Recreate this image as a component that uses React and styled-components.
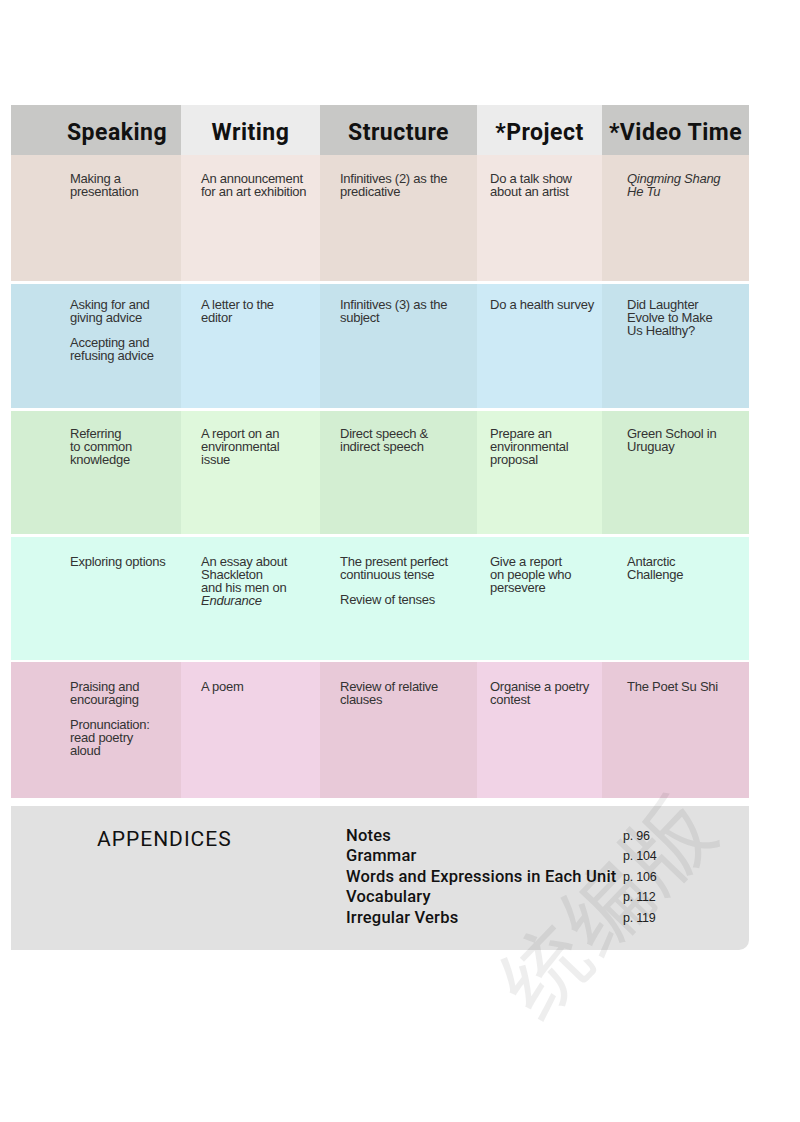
import React from "react";
import styled, { createGlobalStyle } from "styled-components";

const Global = createGlobalStyle`
  html, body { margin: 0; padding: 0; background: #ffffff; }
  body { font-family: "Liberation Sans", Arial, sans-serif; color: #333; }
`;

const Page = styled.div`
  position: relative;
  width: 800px;
  height: 1122px;
  overflow: hidden;
  padding: 105px 0 0 11px;
  box-sizing: border-box;
`;

const Table = styled.div`
  width: 738px;
  display: flex;
  flex-direction: column;
`;

const COLS = "170px 139px 157px 125px 147px";

const HeaderRow = styled.div`
  display: grid;
  grid-template-columns: ${COLS};
  height: 50px;
`;

const HeadCell = styled.div`
  background: ${(p) => (p.$light ? "#ececec" : "#c8c8c6")};
  display: flex;
  align-items: center;
  justify-content: center;
  padding-left: ${(p) => p.$indent || 0}px;
  padding-top: 4px;
  font-family: Roboto, "DejaVu Sans", sans-serif;
  font-weight: 700;
  font-size: 23px;
  color: #111;
  letter-spacing: 0.5px;
  white-space: nowrap;
`;

const Row = styled.div`
  display: grid;
  grid-template-columns: ${COLS};
  height: ${(p) => p.$h}px;
  margin-top: ${(p) => p.$gap}px;
`;

const Cell = styled.div`
  background: ${(p) => (p.$light ? p.$tone[1] : p.$tone[0])};
  padding: ${(p) => p.$pad}px 6px 0 ${(p) => p.$left}px;
  font-family: "Liberation Sans", Arial, sans-serif;
  font-size: 13px;
  line-height: 13px;
  letter-spacing: -0.25px;
  color: #333;
`;

const Para = styled.p`
  margin: 0 0 12px;
  font-style: ${(p) => (p.$italic ? "italic" : "normal")};
`;

const Em = styled.span`
  font-style: italic;
`;

const Appendix = styled.div`
  margin-top: 8px;
  width: 738px;
  height: 144px;
  background: #e1e1e1;
  border-bottom-right-radius: 10px;
  display: flex;
  box-sizing: border-box;
`;

const AppTitle = styled.div`
  width: 249px;
  padding: 20px 0 0 86px;
  font-family: Roboto, "DejaVu Sans", sans-serif;
  font-size: 21px;
  line-height: 26px;
  letter-spacing: 1px;
  color: #111;
`;

const AppList = styled.div`
  padding-top: 19px;
  display: grid;
  grid-template-columns: 277px auto;
  grid-auto-rows: 20.5px;
  align-items: center;
`;

const AppItem = styled.div`
  font-family: Roboto, "DejaVu Sans", sans-serif;
  font-weight: 500;
  font-size: 16.5px;
  letter-spacing: 0.2px;
  color: #111;
  white-space: nowrap;
`;

const AppPage = styled.div`
  font-family: "Liberation Sans", Arial, sans-serif;
  font-size: 12.5px;
  letter-spacing: -0.2px;
  color: #222;
  padding-top: 1px;
`;

const Watermark = styled.div`
  position: absolute;
  left: 466px;
  top: 848px;
  width: 300px;
  font-family: "Noto Sans CJK SC", sans-serif;
  font-size: 86px;
  line-height: 86px;
  letter-spacing: 2px;
  color: rgba(0, 0, 0, 0.065);
  transform: rotate(-46deg);
  white-space: nowrap;
  pointer-events: none;
`;

const headers = [
  { t: "Speaking", indent: 42 },
  { t: "Writing", light: true },
  { t: "Structure" },
  { t: "*Project", light: true },
  { t: "*Video Time" },
];

const lefts = [59, 20, 20, 13, 25];

const rows = [
  {
    h: 126, gap: 0, pad: 17, tone: ["#e8dcd5", "#f2e6e2"],
    cells: [
      [["Making a", "presentation"]],
      [["An announcement", "for an art exhibition"]],
      [["Infinitives (2) as the", "predicative"]],
      [["Do a talk show", "about an artist"]],
      [{ italic: true, lines: ["Qingming Shang", "He Tu"] }],
    ],
  },
  {
    h: 124, gap: 3, pad: 14, tone: ["#c5e2ec", "#cdeaf6"],
    cells: [
      [["Asking for and", "giving advice"], ["Accepting and", "refusing advice"]],
      [["A letter to the", "editor"]],
      [["Infinitives (3) as the", "subject"]],
      [["Do a health survey"]],
      [["Did Laughter", "Evolve to Make", "Us Healthy?"]],
    ],
  },
  {
    h: 123, gap: 3, pad: 16, tone: ["#d3eed2", "#dff8dc"],
    cells: [
      [["Referring", "to common", "knowledge"]],
      [["A report on an", "environmental", "issue"]],
      [["Direct speech &", "indirect speech"]],
      [["Prepare an", "environmental", "proposal"]],
      [["Green School in", "Uruguay"]],
    ],
  },
  {
    h: 123, gap: 3, pad: 18, tone: ["#d8fcf0", "#d8fcf0"],
    cells: [
      [["Exploring options"]],
      [["An essay about", "Shackleton", "and his men on", { em: "Endurance" }]],
      [["The present perfect", "continuous tense"], ["Review of tenses"]],
      [["Give a report", "on people who", "persevere"]],
      [["Antarctic", "Challenge"]],
    ],
  },
  {
    h: 136, gap: 2, pad: 18, tone: ["#e8c9d8", "#f1d3e6"],
    cells: [
      [["Praising and", "encouraging"], ["Pronunciation:", "read poetry", "aloud"]],
      [["A poem"]],
      [["Review of relative", "clauses"]],
      [["Organise a poetry", "contest"]],
      [["The Poet Su Shi"]],
    ],
  },
];

const appendices = [
  ["Notes", "p. 96"],
  ["Grammar", "p. 104"],
  ["Words and Expressions in Each Unit", "p. 106"],
  ["Vocabulary", "p. 112"],
  ["Irregular Verbs", "p. 119"],
];

function renderPara(p, i) {
  if (!Array.isArray(p)) {
    return (
      <Para key={i} $italic={p.italic}>
        {p.lines.map((l, j) => (
          <React.Fragment key={j}>
            {j > 0 && <br />}
            {l}
          </React.Fragment>
        ))}
      </Para>
    );
  }
  return (
    <Para key={i}>
      {p.map((l, j) => (
        <React.Fragment key={j}>
          {j > 0 && <br />}
          {typeof l === "string" ? l : <Em>{l.em}</Em>}
        </React.Fragment>
      ))}
    </Para>
  );
}

export default function App() {
  return (
    <Page>
      <Global />
      <Table>
        <HeaderRow>
          {headers.map((h) => (
            <HeadCell key={h.t} $light={h.light} $indent={h.indent}>
              {h.t}
            </HeadCell>
          ))}
        </HeaderRow>
        {rows.map((r, ri) => (
          <Row key={ri} $h={r.h} $gap={r.gap}>
            {r.cells.map((c, ci) => (
              <Cell
                key={ci}
                $tone={r.tone}
                $light={ci % 2 === 1}
                $pad={r.pad}
                $left={lefts[ci]}
              >
                {c.map(renderPara)}
              </Cell>
            ))}
          </Row>
        ))}
      </Table>
      <Appendix>
        <AppTitle>APPENDICES</AppTitle>
        <AppList>
          {appendices.map(([t, p]) => (
            <React.Fragment key={t}>
              <AppItem>{t}</AppItem>
              <AppPage>{p}</AppPage>
            </React.Fragment>
          ))}
        </AppList>
      </Appendix>
      <Watermark>统编版</Watermark>
    </Page>
  );
}
